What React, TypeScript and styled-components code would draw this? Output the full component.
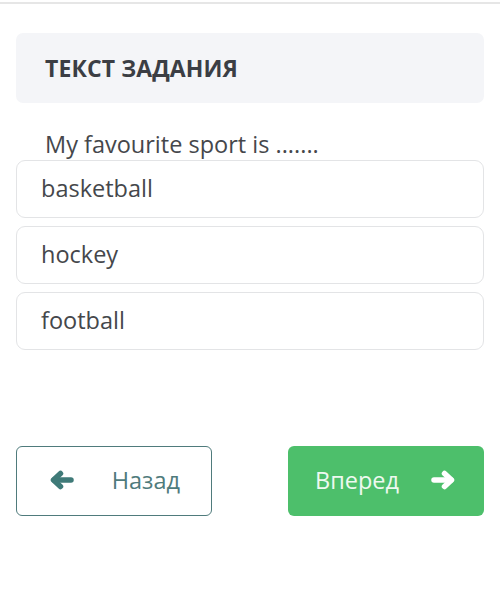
import React from "react";
import styled, { createGlobalStyle } from "styled-components";

const Global = createGlobalStyle`
  html, body { margin: 0; padding: 0; background: #ffffff; }
  body { font-family: "Open Sans", "Noto Sans", sans-serif; }
`;

const Page = styled.div`
  width: 500px;
  height: 612px;
  box-sizing: border-box;
  border-top: 2px solid #e6e6e6;
  margin-top: 2px;
  padding: 29px 16px 0 16px;
  display: flex;
  flex-direction: column;
`;

const Header = styled.div`
  background: #f4f5f8;
  border-radius: 7px;
  height: 70px;
  display: flex;
  align-items: center;
  padding-left: 29px;
  font-weight: 700;
  font-size: 23px;
  color: #3b3e44;
  letter-spacing: 0.1px;
`;

const Question = styled.div`
  margin-top: 25px;
  padding-left: 29px;
  font-size: 23.5px;
  line-height: 32px;
  color: #45474b;
`;

const Options = styled.div`
  display: flex;
  flex-direction: column;
  gap: 8px;
`;

const Option = styled.div`
  height: 58px;
  box-sizing: border-box;
  border: 1.5px solid #e3e4e6;
  border-radius: 9px;
  display: flex;
  align-items: center;
  padding-left: 24px;
  padding-bottom: 2px;
  font-size: 23.5px;
  color: #45474b;
`;

const Nav = styled.div`
  margin-top: 96px;
  display: flex;
  justify-content: space-between;
`;

const Button = styled.div<{ $primary?: boolean }>`
  width: 196px;
  height: 70px;
  box-sizing: border-box;
  border-radius: 6px;
  display: flex;
  align-items: center;
  font-size: 23.5px;
  padding-bottom: 2px;
  justify-content: space-between;
  ${(p) =>
    p.$primary
      ? `background: #4dbf6b; color: #eef9f0; border: none; padding-left: 27px; padding-right: 28px;`
      : `background: #fff; color: #4f7b7c; border: 1.5px solid #4f7b7c; padding-left: 32px; padding-right: 31px;`}
`;

const ArrowSvg = styled.svg`
  display: block;
  width: 25px;
  height: 20px;
  flex: none;
`;

function Arrow({ dir, color }: { dir: "left" | "right"; color: string }) {
  return (
    <ArrowSvg viewBox="0 0 25 20" style={dir === "right" ? { transform: "scaleX(-1)" } : undefined}>
      <g fill="none" stroke={color} strokeWidth={5.5} strokeLinecap="round" strokeLinejoin="round">
        <path d="M5 10 H22" />
        <path d="M11.5 3.5 L4.5 10 L11.5 16.5" />
      </g>
    </ArrowSvg>
  );
}

export default function App() {
  return (
    <>
      <Global />
      <Page>
        <Header>ТЕКСТ ЗАДАНИЯ</Header>
        <Question>My favourite sport is .......</Question>
        <Options>
          <Option>basketball</Option>
          <Option>hockey</Option>
          <Option>football</Option>
        </Options>
        <Nav>
          <Button>
            <Arrow dir="left" color="#3f7a78" />
            <span>Назад</span>
          </Button>
          <Button $primary>
            <span>Вперед</span>
            <Arrow dir="right" color="#ffffff" />
          </Button>
        </Nav>
      </Page>
    </>
  );
}
